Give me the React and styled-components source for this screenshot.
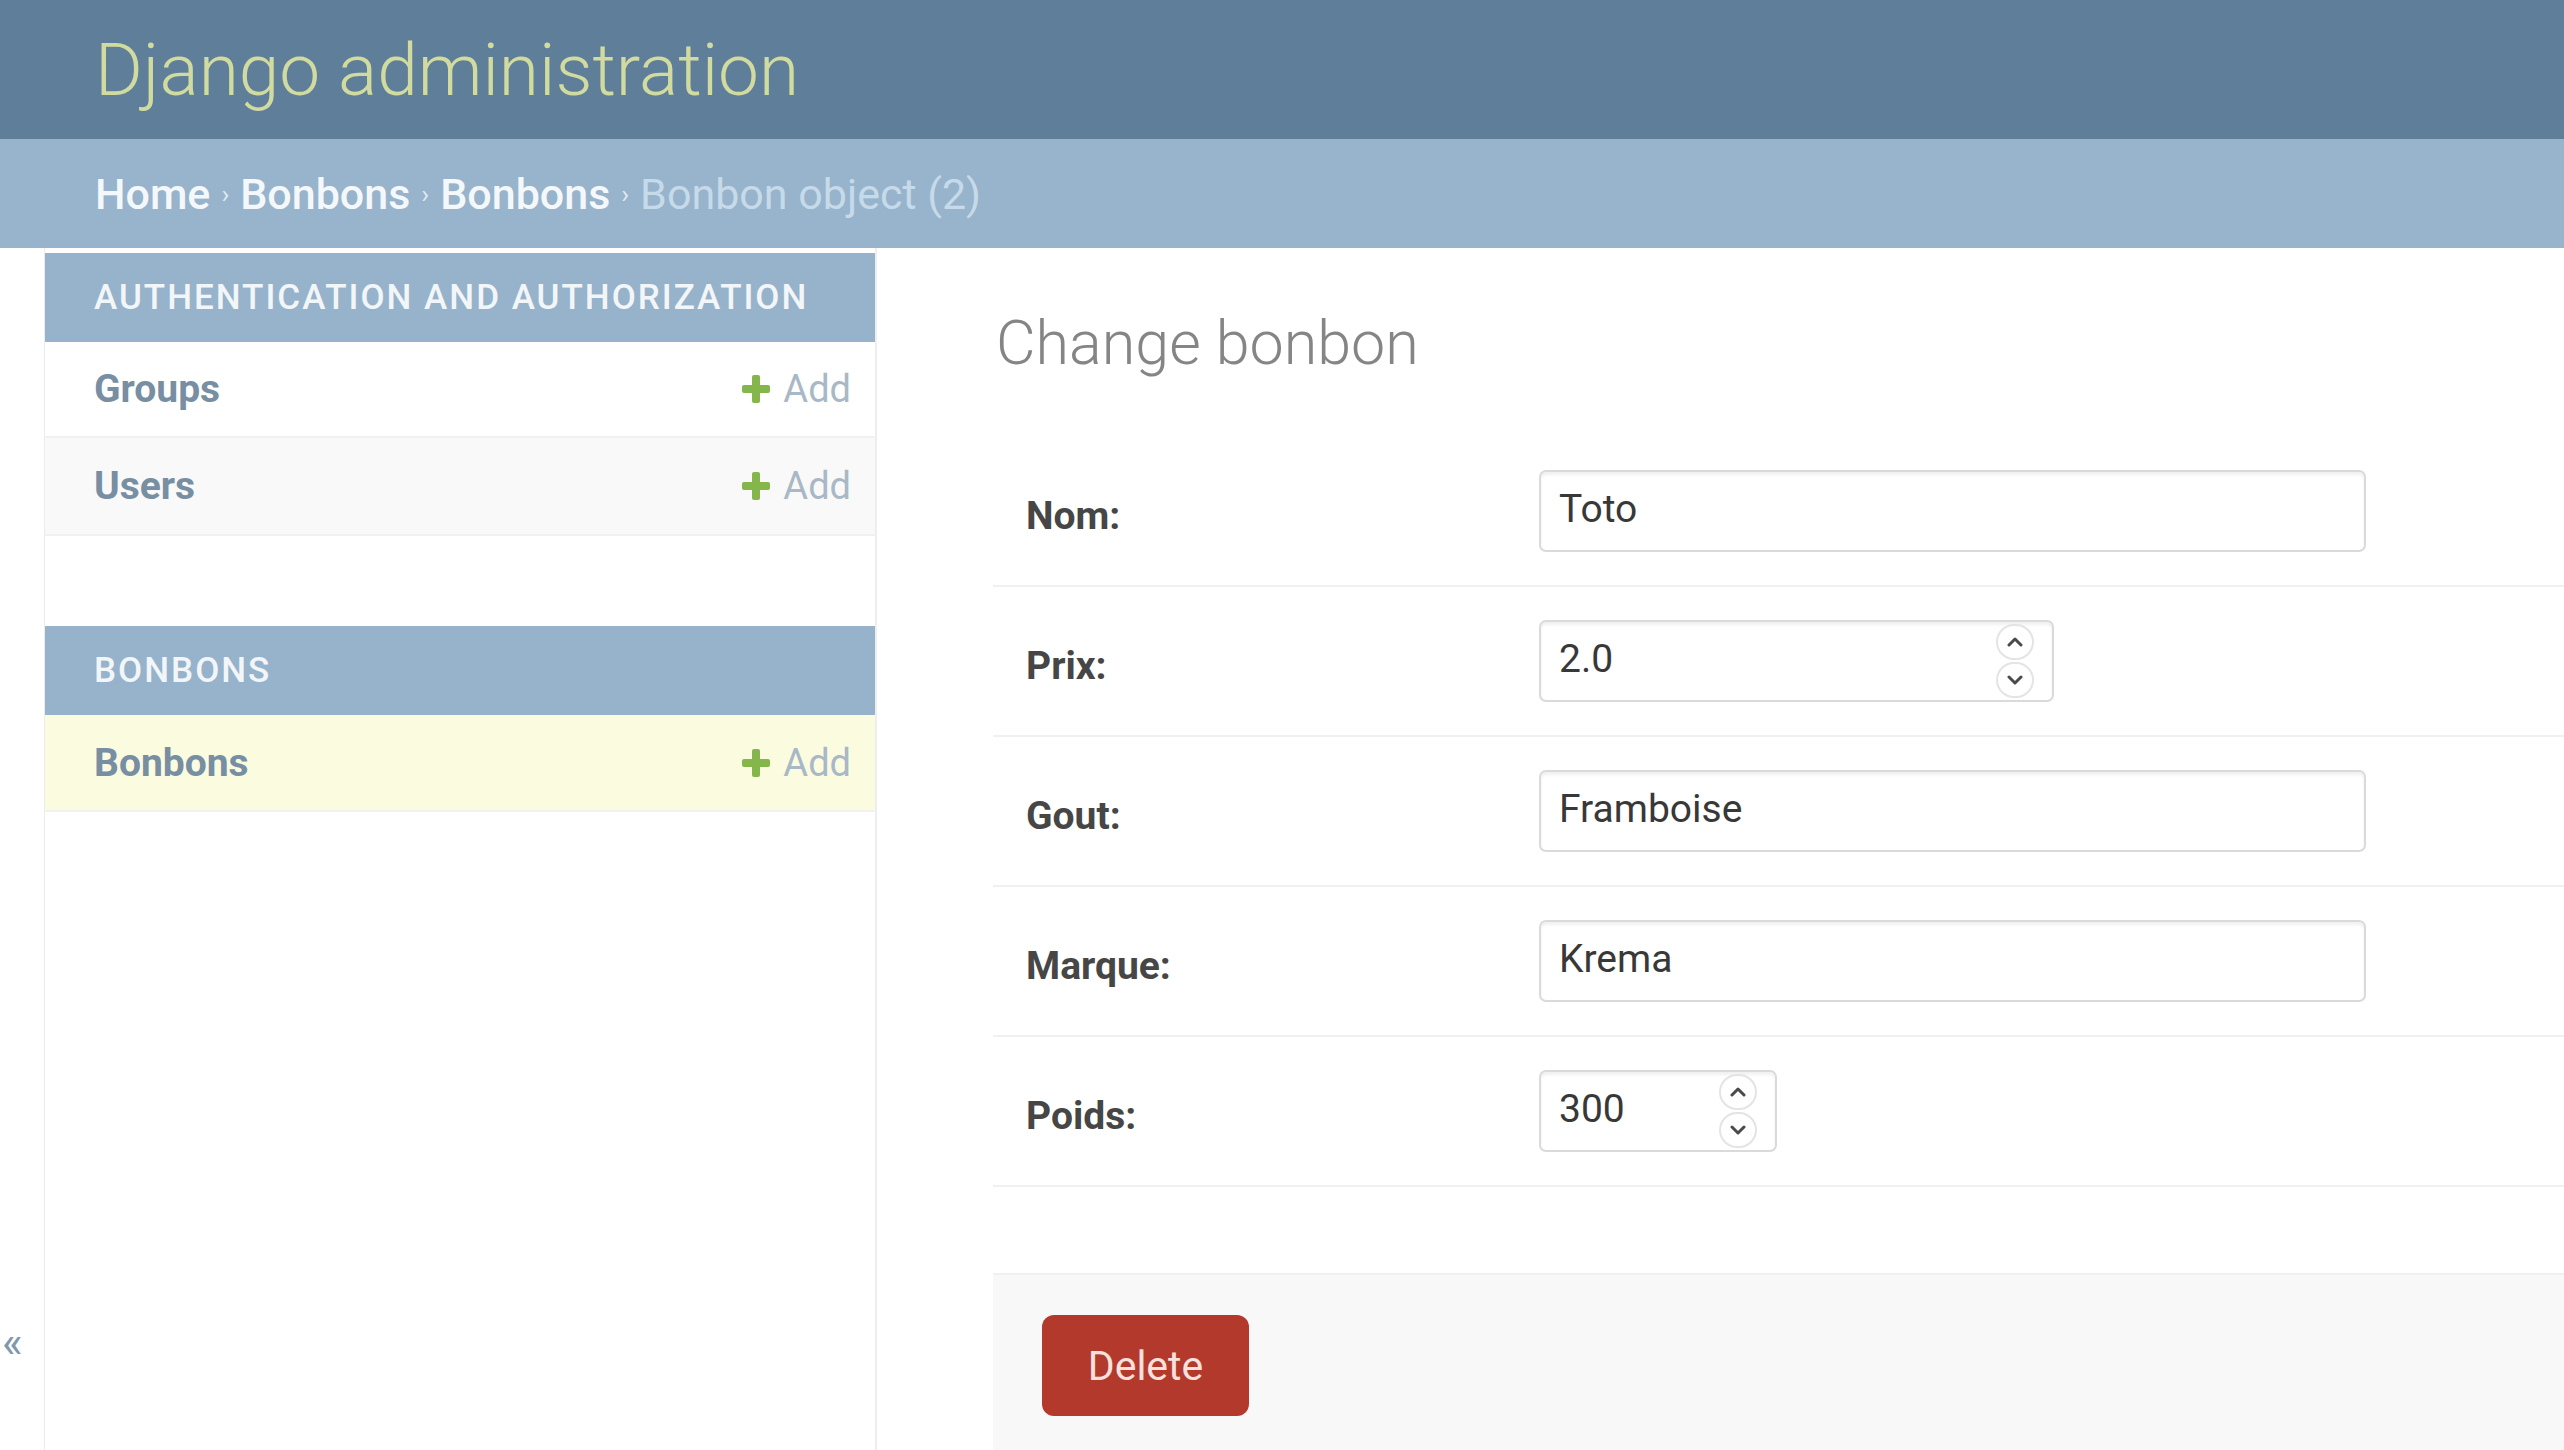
import React from "react";
import styled, { createGlobalStyle } from "styled-components";

const GlobalStyle = createGlobalStyle`
  html, body { margin: 0; padding: 0; overflow: hidden; background: #ffffff; }
  body { font-family: Roboto, "Liberation Sans", Arial, sans-serif; }
  * { box-sizing: border-box; }
`;

const Page = styled.div`
  width: 2564px;
  height: 1450px;
  display: flex;
  flex-direction: column;
  overflow: hidden;
`;

const Header = styled.header`
  height: 139px;
  flex: none;
  background: #5f7e99;
  display: flex;
  align-items: center;
  padding-left: 95px;
`;

const SiteName = styled.h1`
  margin: 0;
  font-size: 73px;
  font-weight: 300;
  color: #d1db9f;
`;

const Breadcrumbs = styled.nav`
  height: 109px;
  flex: none;
  background: #97b4cc;
  display: flex;
  align-items: center;
  padding-left: 95px;
  font-size: 43px;
  color: #f3f6f9;
`;

const Crumb = styled.span`
  color: ${(p) => (p.$current ? "#c6dae9" : "#f5f8fb")};
  font-weight: ${(p) => (p.$current ? 400 : 500)};
`;

const Sep = styled.span`
  font-size: 26px;
  color: #dfe9f2;
  margin: 0 11px;
`;

const Main = styled.div`
  flex: 1;
  display: flex;
  min-height: 0;
`;

const Toggle = styled.div`
  width: 45px;
  flex: none;
  border-right: 1px solid #ececec;
  display: flex;
  align-items: flex-end;
  justify-content: flex-start;
  padding: 0 0 86px 2px;
  color: #7f98ae;
  font-size: 44px;
  line-height: 1;
`;

const Sidebar = styled.aside`
  width: 832px;
  flex: none;
  border-right: 2px solid #eeeeee;
  padding-top: 5px;
`;

const Module = styled.section`
  margin-bottom: 90px;
`;

const Caption = styled.div`
  height: 89px;
  background: #96b3cb;
  display: flex;
  align-items: center;
  padding-left: 49px;
  font-size: 35px;
  letter-spacing: 2px;
  text-transform: uppercase;
  color: #f3f6f9;
  font-weight: 500;
`;

const rowBg = { plain: "#ffffff", alt: "#f9f9f9", current: "#fbfbdf" };

const ModelRow = styled.div`
  height: ${(p) => p.$h || 96}px;
  display: flex;
  align-items: center;
  justify-content: space-between;
  padding: 0 24px 0 49px;
  border-bottom: 2px solid #f1f1f1;
  background: ${(p) => rowBg[p.$variant || "plain"]};
`;

const ModelLink = styled.span`
  font-size: 39px;
  font-weight: 700;
  color: #778ea3;
`;

const AddLink = styled.span`
  display: flex;
  align-items: center;
  gap: 12px;
  font-size: 38px;
  color: #a9b8c6;
`;

const PlusIcon = () => (
  <svg width="30" height="30" viewBox="0 0 30 30">
    <rect x="11" y="1" width="8" height="28" rx="2" fill="#85b64c" />
    <rect x="1" y="11" width="28" height="8" rx="2" fill="#85b64c" />
  </svg>
);

const Content = styled.main`
  flex: 1;
  display: flex;
  flex-direction: column;
  padding: 59px 0 0 116px;
  min-width: 0;
`;

const Title = styled.h1`
  margin: 0 0 58px 3px;
  font-size: 61px;
  line-height: 72px;
  font-weight: 300;
  color: #858585;
`;

const Fieldset = styled.div`
  display: flex;
  flex-direction: column;
`;

const FormRow = styled.div`
  height: 150px;
  display: flex;
  align-items: center;
  padding-left: 33px;
  border-bottom: 2px solid #f0f0f0;
`;

const Label = styled.label`
  width: 513px;
  flex: none;
  font-size: 39px;
  font-weight: 700;
  color: #464646;
  padding-top: 10px;
`;

const Field = styled.div`
  width: ${(p) => p.$w}px;
  height: 82px;
  display: flex;
  align-items: center;
  border: 2px solid #dadada;
  border-radius: 7px;
  box-shadow: inset 0 3px 3px rgba(0, 0, 0, 0.06);
  background: #fff;
  padding: 0 18px 0 18px;
`;

const TextInput = styled.input`
  flex: 1;
  min-width: 0;
  border: none;
  outline: none;
  background: transparent;
  font-family: Roboto, "Liberation Sans", Arial, sans-serif;
  font-size: 39px;
  color: #383838;
  padding: 0;
  margin-top: -4px;
`;

const Spinner = styled.div`
  width: 38px;
  height: 74px;
  flex: none;
  display: flex;
  flex-direction: column;
  gap: 2px;
`;

const SpinHalf = styled.div`
  flex: 1;
  display: flex;
  align-items: center;
  justify-content: center;
  border: 2px solid #e4e4e4;
  border-radius: 18px;
`;

const Chevron = ({ down }) => (
  <svg width="16" height="10" viewBox="0 0 16 10">
    <path
      d={down ? "M2 2 L8 8 L14 2" : "M2 8 L8 2 L14 8"}
      fill="none"
      stroke="#4a4a4a"
      strokeWidth="3"
      strokeLinecap="round"
      strokeLinejoin="round"
    />
  </svg>
);

const SubmitRow = styled.div`
  margin-top: 86px;
  flex: 1;
  background: #f8f8f8;
  border-top: 2px solid #f0f0f0;
  padding: 40px 49px 0;
`;

const DeleteButton = styled.button`
  width: 207px;
  height: 101px;
  border: none;
  border-radius: 12px;
  background: #b3392c;
  color: #f6e1de;
  font-family: Roboto, "Liberation Sans", Arial, sans-serif;
  font-size: 41px;
  cursor: pointer;
`;

const fields = [
  { label: "Nom:", value: "Toto", w: 827 },
  { label: "Prix:", value: "2.0", w: 515, number: true },
  { label: "Gout:", value: "Framboise", w: 827 },
  { label: "Marque:", value: "Krema", w: 827 },
  { label: "Poids:", value: "300", w: 238, number: true },
];

export default function App() {
  return (
    <>
      <GlobalStyle />
      <Page>
        <Header>
          <SiteName>Django administration</SiteName>
        </Header>
        <Breadcrumbs>
          <Crumb>Home</Crumb>
          <Sep>›</Sep>
          <Crumb>Bonbons</Crumb>
          <Sep>›</Sep>
          <Crumb>Bonbons</Crumb>
          <Sep>›</Sep>
          <Crumb $current>Bonbon object (2)</Crumb>
        </Breadcrumbs>
        <Main>
          <Toggle>«</Toggle>
          <Sidebar>
            <Module>
              <Caption>Authentication and Authorization</Caption>
              <ModelRow $variant="plain" $h={96}>
                <ModelLink>Groups</ModelLink>
                <AddLink>
                  <PlusIcon />
                  Add
                </AddLink>
              </ModelRow>
              <ModelRow $variant="alt" $h={98}>
                <ModelLink>Users</ModelLink>
                <AddLink>
                  <PlusIcon />
                  Add
                </AddLink>
              </ModelRow>
            </Module>
            <Module>
              <Caption>Bonbons</Caption>
              <ModelRow $variant="current" $h={97}>
                <ModelLink>Bonbons</ModelLink>
                <AddLink>
                  <PlusIcon />
                  Add
                </AddLink>
              </ModelRow>
            </Module>
          </Sidebar>
          <Content>
            <Title>Change bonbon</Title>
            <Fieldset>
              {fields.map((f) => (
                <FormRow key={f.label}>
                  <Label>{f.label}</Label>
                  <Field $w={f.w}>
                    <TextInput readOnly value={f.value} />
                    {f.number && (
                      <Spinner>
                        <SpinHalf>
                          <Chevron />
                        </SpinHalf>
                        <SpinHalf>
                          <Chevron down />
                        </SpinHalf>
                      </Spinner>
                    )}
                  </Field>
                </FormRow>
              ))}
            </Fieldset>
            <SubmitRow>
              <DeleteButton>Delete</DeleteButton>
            </SubmitRow>
          </Content>
        </Main>
      </Page>
    </>
  );
}
